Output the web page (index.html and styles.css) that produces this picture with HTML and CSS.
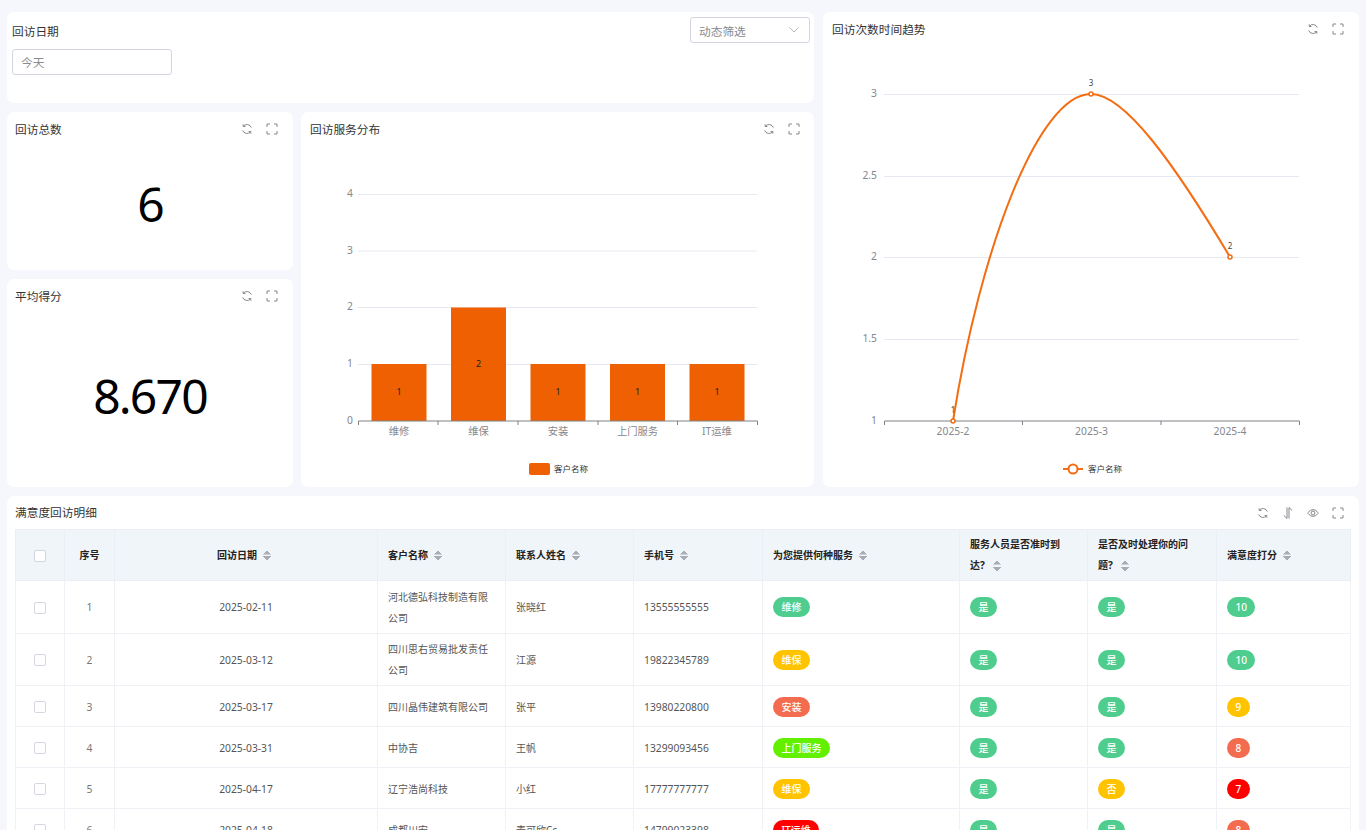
FILE: index.html
```html
<!DOCTYPE html>
<html>
    <head>
        <meta charset="UTF-8">
        <meta name="viewport" content="width=device-width, initial-scale=1.0">
        <title>满意度回访</title>
        <link rel="stylesheet" href="styles.css">
    </head>
    <body>
        <svg class="icon-defs" aria-hidden="true">
            <symbol id="i-refresh" viewBox="0 0 12 12">
                <path d="M10.3 4.6A4.6 4.6 0 0 0 2.4 3.2M1.7 7.4a4.6 4.6 0 0 0 7.9 1.4M2.2 1.3v2.2h2.2M9.8 10.7V8.5H7.6"/>
            </symbol>
            <symbol id="i-full" viewBox="0 0 12 12">
                <path d="M1 4V1h3M8 1h3v3M11 8v3H8M4 11H1V8"/>
            </symbol>
            <symbol id="i-height" viewBox="0 0 12 12">
                <path d="M5 .5v11L1.8 8.4M7 11.500V.5l3.200 3.100"/>
            </symbol>
            <symbol id="i-eye" viewBox="0 0 12 12">
                <path d="M.8 6S2.800 2.600 6 2.600 11.200 6 11.200 6 9.200 9.400 6 9.400.8 6 .8 6z"/>
                <circle cx="6" cy="6" r="1.900"/>
            </symbol>
        </svg>

        <div class="page">
            <div class="top">
                <div class="top-left">
                    <div class="card filter-card">
                        <div>
                            <div class="filter-label">回访日期</div>
                            <div class="date-input">今天</div>
                        </div>
                        <div class="select">
                            <span>动态筛选</span>
                            <svg class="chevron" viewBox="0 0 10 6"><path d="M.5.5 5 5 9.500.5"/></svg>
                        </div>
                    </div>

                    <div class="top-row">
                        <div class="stats">
                            <div class="card stat-card total">
                                <div class="card-head">
                                    <span class="card-title">回访总数</span>
                                    <div class="tools">
                                        <svg class="tool"><use href="#i-refresh"/></svg>
                                        <svg class="tool"><use href="#i-full"/></svg>
                                    </div>
                                </div>
                                <div class="stat-value">6</div>
                            </div>
                            <div class="card stat-card average">
                                <div class="card-head">
                                    <span class="card-title">平均得分</span>
                                    <div class="tools">
                                        <svg class="tool"><use href="#i-refresh"/></svg>
                                        <svg class="tool"><use href="#i-full"/></svg>
                                    </div>
                                </div>
                                <div class="stat-value">8.670</div>
                            </div>
                        </div>

                        <div class="card service-card">
                            <div class="card-head">
                                <span class="card-title">回访服务分布</span>
                                <div class="tools">
                                    <svg class="tool"><use href="#i-refresh"/></svg>
                                    <svg class="tool"><use href="#i-full"/></svg>
                                </div>
                            </div>
                            <svg class="chart" viewBox="301 146 513 341">
                                <path class="grid" d="M358 194.500H757M358 251H757M358 307.500H757M358 364.500H757"/>
                                <g class="axis-label" text-anchor="end">
                                    <text x="353" y="197">4</text>
                                    <text x="353" y="253.500">3</text>
                                    <text x="353" y="310">2</text>
                                    <text x="353" y="366.500">1</text>
                                    <text x="353" y="423.500">0</text>
                                </g>
                                <rect class="bar" x="371.500" y="364" width="55" height="57"/>
                                <rect class="bar" x="451" y="307.500" width="55" height="113.500"/>
                                <rect class="bar" x="530.500" y="364" width="55" height="57"/>
                                <rect class="bar" x="610" y="364" width="55" height="57"/>
                                <rect class="bar" x="689.500" y="364" width="55" height="57"/>
                                <path class="axis" d="M358.500 425v-4H757.500v4M438 421v4M518 421v4M598 421v4M677.500 421v4"/>
                                <g class="bar-label" text-anchor="middle">
                                    <text x="399" y="395">1</text>
                                    <text x="478.500" y="366.500">2</text>
                                    <text x="558" y="395">1</text>
                                    <text x="637.500" y="395">1</text>
                                    <text x="717" y="395">1</text>
                                </g>
                                <g class="axis-label" text-anchor="middle">
                                    <text x="399" y="435">维修</text>
                                    <text x="478.500" y="435">维保</text>
                                    <text x="558" y="435">安装</text>
                                    <text x="637.500" y="435">上门服务</text>
                                    <text x="717" y="435">IT运维</text>
                                </g>
                                <rect class="bar" x="529" y="463" width="21" height="12" rx="2"/>
                                <text class="legend-label" x="554" y="472">客户名称</text>
                            </svg>
                        </div>
                    </div>
                </div>

                <div class="card trend-card">
                    <div class="card-head">
                        <span class="card-title">回访次数时间趋势</span>
                        <div class="tools">
                            <svg class="tool"><use href="#i-refresh"/></svg>
                            <svg class="tool"><use href="#i-full"/></svg>
                        </div>
                    </div>
                    <svg class="chart" viewBox="823 46 536 441">
                        <path class="grid" d="M884 94.500H1299M884 176.500H1299M884 257.500H1299M884 339.500H1299"/>
                        <g class="axis-label" text-anchor="end">
                            <text x="877" y="97">3</text>
                            <text x="877" y="179">2.5</text>
                            <text x="877" y="260">2</text>
                            <text x="877" y="342">1.5</text>
                            <text x="877" y="424">1</text>
                        </g>
                        <path class="axis" d="M884.500 425v-4H1299.500v4M1022.500 421v4M1161 421v4"/>
                        <path class="line" d="M953 421C980 250 1038 94 1091 94C1125 94 1175 165 1230 257"/>
                        <circle class="dot" cx="953" cy="421" r="2"/>
                        <circle class="dot" cx="1091" cy="94" r="2"/>
                        <circle class="dot" cx="1230" cy="257" r="2"/>
                        <g class="point-label" text-anchor="middle">
                            <text x="953" y="413">1</text>
                            <text x="1091" y="86">3</text>
                            <text x="1230" y="249">2</text>
                        </g>
                        <g class="axis-label" text-anchor="middle">
                            <text x="953" y="435">2025-2</text>
                            <text x="1091.500" y="435">2025-3</text>
                            <text x="1230" y="435">2025-4</text>
                        </g>
                        <path class="line" d="M1063 469h20"/>
                        <circle class="legend-dot" cx="1073" cy="469" r="4.500"/>
                        <text class="legend-label" x="1088" y="472">客户名称</text>
                    </svg>
                </div>
            </div>

            <div class="card table-card">
                <div class="card-head">
                    <span class="card-title">满意度回访明细</span>
                    <div class="tools">
                        <svg class="tool"><use href="#i-refresh"/></svg>
                        <svg class="tool"><use href="#i-height"/></svg>
                        <svg class="tool"><use href="#i-eye"/></svg>
                        <svg class="tool"><use href="#i-full"/></svg>
                    </div>
                </div>
                <table class="detail">
                    <colgroup>
                        <col class="c-check"><col class="c-index"><col class="c-date"><col class="c-name">
                        <col class="c-contact"><col class="c-phone"><col class="c-service">
                        <col class="c-arrive"><col class="c-handle"><col class="c-score">
                    </colgroup>
                    <thead>
                        <tr>
                            <th class="center"><span class="check"></span></th>
                            <th class="center">序号</th>
                            <th class="center">回访日期<i class="sort"></i></th>
                            <th>客户名称<i class="sort"></i></th>
                            <th>联系人姓名<i class="sort"></i></th>
                            <th>手机号<i class="sort"></i></th>
                            <th>为您提供何种服务<i class="sort"></i></th>
                            <th>服务人员是否准时到达? <i class="sort"></i></th>
                            <th>是否及时处理你的问题? <i class="sort"></i></th>
                            <th>满意度打分<i class="sort"></i></th>
                        </tr>
                    </thead>
                    <tbody>
                        <tr class="tall">
                            <td class="center"><span class="check"></span></td>
                            <td class="center num index">1</td>
                            <td class="center num">2025-02-11</td>
                            <td>河北德弘科技制造有限公司</td>
                            <td>张晓红</td>
                            <td class="num">13555555555</td>
                            <td><span class="tag green">维修</span></td>
                            <td><span class="tag green">是</span></td>
                            <td><span class="tag green">是</span></td>
                            <td><span class="tag green">10</span></td>
                        </tr>
                        <tr class="tall">
                            <td class="center"><span class="check"></span></td>
                            <td class="center num index">2</td>
                            <td class="center num">2025-03-12</td>
                            <td>四川思右贸易批发责任公司</td>
                            <td>江源</td>
                            <td class="num">19822345789</td>
                            <td><span class="tag yellow">维保</span></td>
                            <td><span class="tag green">是</span></td>
                            <td><span class="tag green">是</span></td>
                            <td><span class="tag green">10</span></td>
                        </tr>
                        <tr>
                            <td class="center"><span class="check"></span></td>
                            <td class="center num index">3</td>
                            <td class="center num">2025-03-17</td>
                            <td>四川晶伟建筑有限公司</td>
                            <td>张平</td>
                            <td class="num">13980220800</td>
                            <td><span class="tag coral">安装</span></td>
                            <td><span class="tag green">是</span></td>
                            <td><span class="tag green">是</span></td>
                            <td><span class="tag yellow">9</span></td>
                        </tr>
                        <tr>
                            <td class="center"><span class="check"></span></td>
                            <td class="center num index">4</td>
                            <td class="center num">2025-03-31</td>
                            <td>中协吉</td>
                            <td>王帆</td>
                            <td class="num">13299093456</td>
                            <td><span class="tag lime">上门服务</span></td>
                            <td><span class="tag green">是</span></td>
                            <td><span class="tag green">是</span></td>
                            <td><span class="tag coral">8</span></td>
                        </tr>
                        <tr>
                            <td class="center"><span class="check"></span></td>
                            <td class="center num index">5</td>
                            <td class="center num">2025-04-17</td>
                            <td>辽宁浩尚科技</td>
                            <td>小红</td>
                            <td class="num">17777777777</td>
                            <td><span class="tag yellow">维保</span></td>
                            <td><span class="tag green">是</span></td>
                            <td><span class="tag yellow">否</span></td>
                            <td><span class="tag red">7</span></td>
                        </tr>
                        <tr>
                            <td class="center"><span class="check"></span></td>
                            <td class="center num index">6</td>
                            <td class="center num">2025-04-18</td>
                            <td>成都川安</td>
                            <td>麦可欣Cc</td>
                            <td class="num">14799023398</td>
                            <td><span class="tag red">IT运维</span></td>
                            <td><span class="tag green">是</span></td>
                            <td><span class="tag green">是</span></td>
                            <td><span class="tag coral">8</span></td>
                        </tr>
                    </tbody>
                </table>
            </div>
        </div>
    </body>
</html>
```

FILE: styles.css
```css
* {
    box-sizing: border-box;
}

html, body {
    height: 100%;
    margin: 0;
    overflow: hidden;
}

body {
    font-family: "Noto Sans", "Noto Sans CJK SC", sans-serif;
    font-size: 11.700px;
    color: #333;
    background-color: #f5f7fc;
}

.icon-defs {
    position: absolute;
    width: 0;
    height: 0;
}

.page {
    padding: 12px 7px 0;
}

.card {
    background-color: #ffffff;
    border-radius: 7px;
}

.top {
    display: flex;
    gap: 9px;
    height: 475px;
}

.top-left {
    width: 807px;
    display: flex;
    flex-direction: column;
    gap: 9px;
}

.top-row {
    flex: 1;
    display: flex;
    gap: 8px;
}

.filter-card {
    height: 91px;
    display: flex;
    justify-content: space-between;
    padding: 5px 4px 0 5px;
}

.filter-label {
    line-height: 28px;
    margin-bottom: 4px;
}

.date-input {
    width: 160px;
    height: 26px;
    line-height: 24px;
    padding-left: 8px;
    color: #8a8a8a;
    border: 1px solid #d3d5e3;
    border-radius: 3px;
}

.select {
    width: 120px;
    height: 26px;
    padding: 0 9px 0 8px;
    display: flex;
    align-items: center;
    justify-content: space-between;
    color: #8a8a8a;
    border: 1px solid #d3d5e3;
    border-radius: 3px;
}

.chevron {
    width: 10px;
    height: 6px;
    margin-right: 1px;
    fill: none;
    stroke: #b4b6bd;
}

.card-head {
    height: 34px;
    padding: 0 15px 0 8px;
    display: flex;
    align-items: center;
    justify-content: space-between;
}

.card-title {
    margin-top: -2px;
    color: #333;
}

.tools {
    display: flex;
    gap: 13px;
}

.tool {
    width: 12px;
    height: 12px;
    fill: none;
    stroke: #85878c;
    stroke-width: 1;
}

.stats {
    width: 286px;
    display: flex;
    flex-direction: column;
    gap: 9px;
}

.stat-card {
    display: flex;
    flex-direction: column;
}

.total {
    height: 158px;
}

.average {
    flex: 1;
}

.stat-value {
    flex: 1;
    display: flex;
    align-items: center;
    justify-content: center;
    font-size: 48px;
    letter-spacing: -1.800px;
    color: #000;
    padding-bottom: 10px;
}

.service-card {
    flex: 1;
}

.service-card .card-head {
    padding: 0 14px 0 9px;
}

.trend-card {
    flex: 1;
}

.trend-card .card-head {
    padding-left: 9px;
}

.chart {
    display: block;
    width: 100%;
}

.service-card .chart {
    height: 341px;
}

.trend-card .chart {
    height: 441px;
}

.grid {
    fill: none;
    stroke: #e6e9f2;
    stroke-width: 1;
}

.axis {
    fill: none;
    stroke: #7f8186;
    stroke-width: 1;
}

.axis-label {
    font-size: 10.300px;
    fill: #85878c;
}

.bar {
    fill: #ee6002;
}

.bar-label {
    font-size: 9px;
    fill: #222;
}

.point-label {
    font-size: 8px;
    fill: #444;
}

.legend-label {
    font-size: 8.500px;
    fill: #333;
}

.line {
    fill: none;
    stroke: #f36d12;
    stroke-width: 2;
}

.dot {
    fill: #ffffff;
    stroke: #f36d12;
    stroke-width: 1.500;
}

.legend-dot {
    fill: #ffffff;
    stroke: #f36d12;
    stroke-width: 2;
}

.table-card {
    margin-top: 9px;
    padding: 0 8px;
    height: 400px;
}

.table-card .card-head {
    height: 33px;
    padding-left: 0;
    padding-right: 7px;
}

.detail {
    width: 1335px;
    table-layout: fixed;
    border-collapse: collapse;
    font-size: 10px;
    line-height: 21px;
    color: #555;
}

.c-check { width: 49px; }
.c-index { width: 50px; }
.c-date { width: 263px; }
.c-name { width: 128px; }
.c-contact { width: 128px; }
.c-phone { width: 129px; }
.c-service { width: 197px; }
.c-arrive { width: 128px; }
.c-handle { width: 129px; }
.c-score { width: 134px; }

.detail th, .detail td {
    padding: 0 10px;
    border: 1px solid #eff1f7;
    text-align: left;
    word-break: break-all;
}

.detail th {
    height: 51px;
    padding-right: 16px;
    font-weight: 700;
    color: #222;
    background-color: #f0f5fa;
    border-color: #eaeff6;
}

.detail td {
    height: 41px;
    padding-top: 2px;
}

.detail td:has(.tag), .detail td:has(.check) {
    padding-top: 0;
}

.detail .tall td {
    height: 52.500px;
}

.detail th.center {
    padding: 0 10px;
    text-align: center;
}

.detail td.center {
    text-align: center;
}

.num {
    font-size: 10.300px;
}

.index {
    color: #777;
}

.check {
    display: inline-block;
    width: 12px;
    height: 12px;
    vertical-align: middle;
    background-color: #ffffff;
    border: 1px solid #d4d6e0;
    border-radius: 2px;
}

.sort {
    display: inline-block;
    width: 8px;
    height: 11px;
    margin: 0 4px 0 6px;
    vertical-align: -2px;
    background:
        linear-gradient(to bottom right, transparent 50%, #a9acb3 50%) 0 0 / 4px 4.500px no-repeat,
        linear-gradient(to bottom left, transparent 50%, #a9acb3 50%) 4px 0 / 4px 4.500px no-repeat,
        linear-gradient(to top right, transparent 50%, #a9acb3 50%) 0 6.500px / 4px 4.500px no-repeat,
        linear-gradient(to top left, transparent 50%, #a9acb3 50%) 4px 6.500px / 4px 4.500px no-repeat;
}

.tag {
    display: inline-block;
    height: 20px;
    line-height: 20px;
    padding: 0 8.500px;
    border-radius: 10px;
    color: #ffffff;
    font-weight: 500;
    vertical-align: middle;
}

.green { background-color: #4ecd8e; }
.yellow { background-color: #ffc300; }
.coral { background-color: #f46c50; }
.lime { background-color: #62f000; }
.red { background-color: #ff0000; }
```
